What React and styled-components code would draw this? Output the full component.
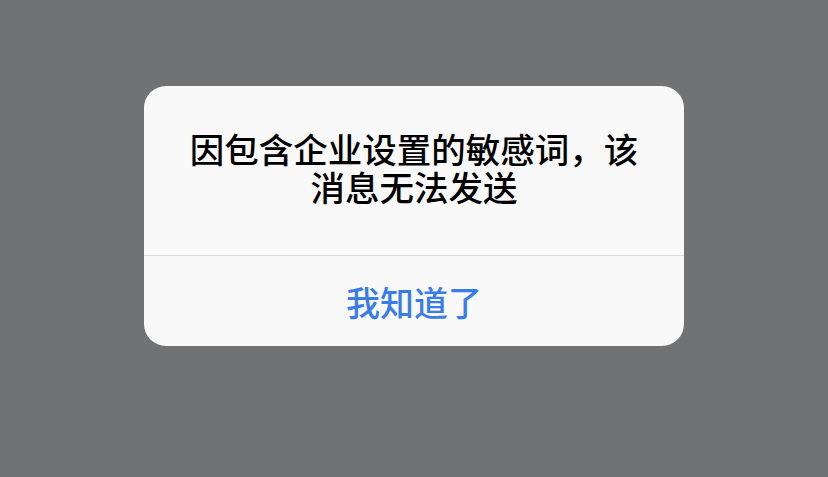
import React from "react";
import styled, { createGlobalStyle } from "styled-components";

const Global = createGlobalStyle`
  html, body { margin: 0; padding: 0; }
  body {
    background: #717274;
    font-family: "Noto Sans CJK SC", "Noto Sans", sans-serif;
  }
`;

const Screen = styled.div`
  width: 828px;
  height: 477px;
  display: flex;
  justify-content: center;
  padding-top: 86px;
  box-sizing: border-box;
`;

const Dialog = styled.div`
  width: 540px;
  height: 260px;
  background: #f9f9f9;
  border-radius: 22px;
  display: flex;
  flex-direction: column;
  overflow: hidden;
`;

const Message = styled.div`
  height: 170px;
  box-sizing: border-box;
  padding: 43px 30px 0;
  text-align: center;
  font-size: 34.5px;
  font-weight: 500;
  line-height: 38px;
  color: #000;
  border-bottom: 1px solid #dcdcdc;
`;

const Action = styled.button`
  flex: 1;
  border: none;
  background: transparent;
  color: #3a7de6;
  font-family: inherit;
  font-size: 34px;
  font-weight: 500;
  padding: 0;
  cursor: pointer;
`;

export default function App() {
  return (
    <>
      <Global />
      <Screen>
        <Dialog>
          <Message>
            因包含企业设置的敏感词，该
            <br />
            消息无法发送
          </Message>
          <Action>我知道了</Action>
        </Dialog>
      </Screen>
    </>
  );
}
